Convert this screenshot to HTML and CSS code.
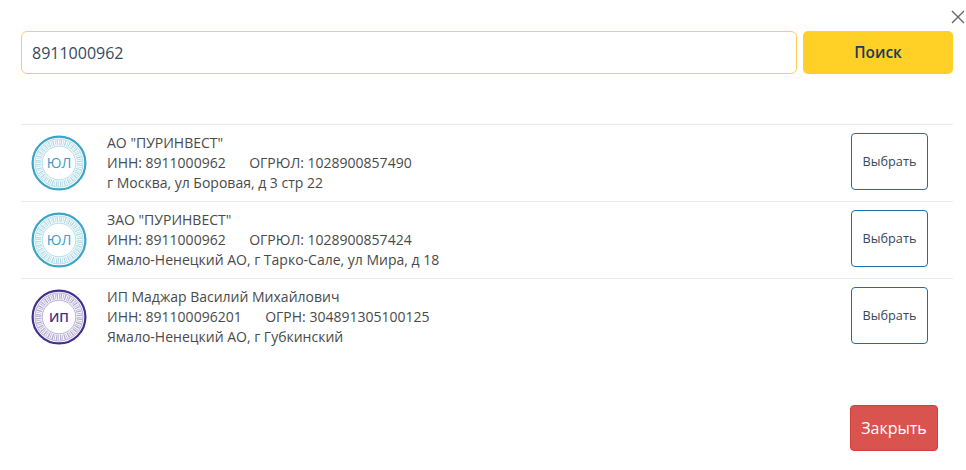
FILE: index.html
```html
<!DOCTYPE html>
<html lang="en">
<head>
    <meta charset="UTF-8">
    <meta name="viewport" content="width=device-width, initial-scale=1.0">
    <title>Поиск</title>
    <link rel="stylesheet" href="styles.css">
</head>
<body>
    <div class="modal">
        <div class="modal-top">
            <svg class="close-icon" width="14" height="14" viewBox="0 0 14 14">
                <path d="M1 1L13 13M13 1L1 13" stroke="#666" stroke-width="1.4" fill="none"/>
            </svg>
        </div>
        <form class="search-form">
            <input class="search-input" type="text" value="8911000962">
            <button class="search-button" type="button">Поиск</button>
        </form>
        <div class="results">
            <div class="result-row">
                <svg class="stamp stamp-ul" width="58" height="58" viewBox="0 0 58 58">
                    <circle cx="29" cy="29" r="26.4" class="stamp-outer"/>
                    <circle cx="29" cy="29" r="24" class="stamp-thin"/>
                    <circle cx="29" cy="29" r="20.5" class="stamp-dots"/>
                    <circle cx="29" cy="29" r="16.8" class="stamp-thin"/>
                    <text x="29" y="34" text-anchor="middle" class="stamp-text">ЮЛ</text>
                </svg>
                <div class="result-info">
                    <div>АО "ПУРИНВЕСТ"</div>
                    <div class="result-codes"><span>ИНН: 8911000962</span><span>ОГРЮЛ: 1028900857490</span></div>
                    <div>г Москва, ул Боровая, д 3 стр 22</div>
                </div>
                <button class="select-button" type="button">Выбрать</button>
            </div>
            <div class="result-row">
                <svg class="stamp stamp-ul" width="58" height="58" viewBox="0 0 58 58">
                    <circle cx="29" cy="29" r="26.4" class="stamp-outer"/>
                    <circle cx="29" cy="29" r="24" class="stamp-thin"/>
                    <circle cx="29" cy="29" r="20.5" class="stamp-dots"/>
                    <circle cx="29" cy="29" r="16.8" class="stamp-thin"/>
                    <text x="29" y="34" text-anchor="middle" class="stamp-text">ЮЛ</text>
                </svg>
                <div class="result-info">
                    <div>ЗАО "ПУРИНВЕСТ"</div>
                    <div class="result-codes"><span>ИНН: 8911000962</span><span>ОГРЮЛ: 1028900857424</span></div>
                    <div>Ямало-Ненецкий АО, г Тарко-Сале, ул Мира, д 18</div>
                </div>
                <button class="select-button" type="button">Выбрать</button>
            </div>
            <div class="result-row">
                <svg class="stamp stamp-ip" width="58" height="58" viewBox="0 0 58 58">
                    <circle cx="29" cy="29" r="26.4" class="stamp-outer"/>
                    <circle cx="29" cy="29" r="24" class="stamp-thin"/>
                    <circle cx="29" cy="29" r="20.5" class="stamp-dots"/>
                    <circle cx="29" cy="29" r="16.8" class="stamp-thin"/>
                    <text x="29" y="34" text-anchor="middle" class="stamp-text">ИП</text>
                </svg>
                <div class="result-info">
                    <div>ИП Маджар Василий Михайлович</div>
                    <div class="result-codes"><span>ИНН: 891100096201</span><span>ОГРН: 304891305100125</span></div>
                    <div>Ямало-Ненецкий АО, г Губкинский</div>
                </div>
                <button class="select-button" type="button">Выбрать</button>
            </div>
        </div>
        <div class="modal-footer">
            <button class="close-button" type="button">Закрыть</button>
        </div>
    </div>
</body>
</html>
```

FILE: styles.css
```css
/* Global styles */
body {
    font-family: "Open Sans", Arial, sans-serif;
    background-color: #fff;
    color: #444;
    margin: 0;
    padding: 0;
}

.modal {
    width: 966px;
    height: 470px;
    box-sizing: border-box;
    padding: 10px 1px 0 21px;
    overflow: hidden;
}

.modal-top {
    display: flex;
    justify-content: flex-end;
    height: 21px;
}

.close-icon {
    display: block;
}

.search-form {
    display: flex;
    gap: 6px;
    width: 932px;
    height: 43px;
}

.search-input {
    flex: 1;
    min-width: 0;
    box-sizing: border-box;
    border: 1px solid #fccf52;
    border-radius: 6px;
    padding: 0 10px;
    font-family: inherit;
    font-size: 16px;
    color: #35495e;
    outline: none;
}

.search-button {
    width: 150px;
    background-color: #ffd026;
    border: none;
    border-radius: 5px;
    color: #1c3c5c;
    font-family: inherit;
    font-size: 15.4px;
    font-weight: 600;
}

.results {
    width: 932px;
    margin-top: 50px;
}

.result-row {
    display: flex;
    align-items: center;
    height: 77px;
    box-sizing: border-box;
    border-top: 1px solid #eaeaea;
    padding: 0 25px 0 9px;
}

/* round stamps next to each company */
.stamp {
    flex: none;
    display: block;
}

.stamp circle {
    fill: none;
}

.stamp-outer {
    stroke-width: 2.2;
}

.stamp-thin {
    stroke-width: 0.7;
    opacity: 0.55;
}

.stamp-dots {
    stroke-width: 5.5;
    stroke-dasharray: 0.8 0.8 1.4 1;
    opacity: 0.4;
}

.stamp-text {
    font-family: "Open Sans", Arial, sans-serif;
    font-size: 14px;
}

.stamp-ul circle {
    stroke: #3ba5c6;
}

.stamp-ul .stamp-text {
    fill: #3d9cc8;
}

.stamp-ip circle {
    stroke: #43308f;
}

.stamp-ip .stamp-text {
    fill: #3f2f88;
    font-size: 13px;
    font-weight: 600;
}

.result-info {
    flex: 1;
    margin-left: 19px;
    font-size: 14px;
    line-height: 20px;
    color: #4a4a4a;
}

.result-codes span + span {
    margin-left: 23.5px;
}

.select-button {
    align-self: flex-start;
    margin-top: 8px;
    width: 77px;
    height: 57px;
    background-color: #fff;
    border: 1px solid #1a6fa8;
    border-radius: 4px;
    color: #35495e;
    font-family: inherit;
    font-size: 12.7px;
    padding: 0 0 2px;
}

.modal-footer {
    display: flex;
    justify-content: flex-end;
    width: 917px;
    margin-top: 50px;
}

.close-button {
    width: 88px;
    height: 46px;
    background-color: #d9534f;
    border: 1px solid #d43f3a;
    border-radius: 4px;
    color: #fff;
    font-family: inherit;
    font-size: 16px;
    padding: 0;
}
```
